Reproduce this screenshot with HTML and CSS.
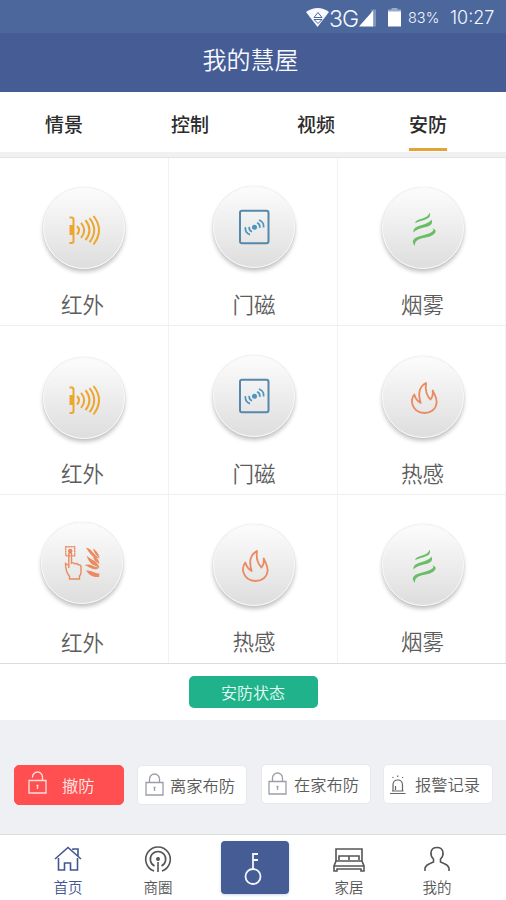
FILE: index.html
```html
<!DOCTYPE html>
<html lang="zh-CN">
<head>
<meta charset="utf-8">
<title>我的慧屋</title>
<link rel="stylesheet" href="styles.css">
</head>
<body>
<svg class="defs" aria-hidden="true">
  <symbol id="infrared" viewBox="0 0 83 83">
    <g fill="none" stroke="#eda62f" stroke-width="2">
      <path d="M26.500 30.500h2q2 0 2 2v21.500q0 2-2 2h-2"/>
      <path d="M26.500 38v10h3.500V38z" fill="#eda62f" stroke="none"/>
      <path d="M34 39q4 4 0 8.500M38 35.800q6.500 7.300 0 15M42.500 33.200q8 10 0 20M46.500 31.200q9.500 12 0 24M50.500 29q11 14 0 28.500"/>
    </g>
  </symbol>
  <symbol id="door" viewBox="0 0 83 83">
    <g fill="none" stroke="#5588aa" stroke-width="2">
      <rect x="27" y="24.800" width="28.500" height="32.500" rx="2"/>
      <g stroke="#4c94bd" stroke-width="1.700">
        <circle cx="41.500" cy="41.300" r="2.500" fill="#4c94bd" stroke="none"/>
        <path d="M44 36.800q3.300 1.300 2.700 5M46 34q5.300 2 4.500 7.500M39 45.800q-3.300-1.300-2.700-5M37 48.600q-5.300-2-4.500-7.500"/>
      </g>
    </g>
  </symbol>
  <symbol id="smoke" viewBox="0 0 83 83">
    <g fill="#69bd65">
      <path d="M33.300 36.300C34 30.500 44 33.500 47.800 25.700C50 33.500 38.500 32.500 33.300 36.300Z"/>
      <path d="M31.500 45.500C30.500 37 45 39.500 49.500 32.500C53 42 38 38.500 31.500 45.500Z"/>
      <path d="M33 59C25 49.500 42 49 48 46C53 43.500 51.500 41.800 49.500 41.300C57.500 42.500 53 49 44 50.500C35.500 52 32.500 54 33 59Z"/>
    </g>
  </symbol>
  <symbol id="flame" viewBox="0 0 83 83">
    <path fill="none" stroke="#e98a61" stroke-width="1.800" stroke-linejoin="round" d="M44 27C37.500 30.500 35.500 37 38.700 47Q34 44.500 32.300 38.500C29.500 42 29.700 45.500 30.300 48C32 54 37 57 42.700 57C49 57 54 53 54.600 47C55 42 52.500 38.500 50.700 34.500Q51.500 40 48.500 43.500C44.500 39.500 43 34 44 27Z"/>
  </symbol>
  <symbol id="touch" viewBox="0 0 83 83">
    <g fill="none" stroke="#e98a61" stroke-width="1.400">
      <rect x="24.700" y="24.700" width="9" height="9" stroke-dasharray="2 .5"/>
      <circle cx="29.200" cy="29" r="2.300" fill="#e98a61" stroke="none"/>
      <path d="M27.800 46V31.500q1.300-1.500 2.700 0v9.500q2-1 3 .8h1q2-1 2.500 1 3-.500 3 2v6q0 2-1.500 3v3.200H28.500v-2.500q-4-5-4-13l3.300 2"/>
    </g>
    <g fill="#e98a61">
      <path d="M45 25.700C51 26.500 51 31 58.500 36.500C51 36 48.500 31 45 25.700Z"/>
      <path d="M52 26.500C55 28.500 58 32 58.500 36Q53 32 52 26.500Z"/>
      <path d="M45.500 33.500C50 38.500 55 37 58.500 45.500C52 43 48.500 42.500 45.500 33.500Z"/>
      <path d="M52 34.500Q58 36 58.500 42Q53 39.500 52 34.500Z"/>
      <path d="M43.500 43C50 41 52 45 58.500 45.500C53 50 49 45 43.500 43Z"/>
      <path d="M45 48.500C51 48 53 51.500 58.500 51.500L58 55C51 55.500 48.500 53 45 48.500Z"/>
    </g>
  </symbol>
</svg>
<main class="app">
  <div class="status">
    <svg class="wifi" viewBox="0 0 24 20"><path d="M0 4Q12-4 23 4L11.500 19z" fill="#f8faff"/><path d="M8 9.500 12 4.500 16 9.500zM8 11.500h8l-4 4z" fill="none" stroke="#4c679c" stroke-width="1"/></svg>
    <span class="net">3G</span>
    <svg class="signal" viewBox="0 0 18 18"><path d="M13 0h5v18h-5z" fill="#7f95bb"/><path d="M0 18 15 1v17z" fill="#fff"/></svg>
    <svg class="battery" viewBox="0 0 13 19"><path d="M3.500 0h6v1.500H13V4H0V1.500h3.500z" fill="#9baac7"/><path d="M0 3.500h13V18.500H0z" fill="#fff"/></svg>
    <span class="percent">83%</span>
    <span class="clock">10:27</span>
  </div>
  <header class="title">我的慧屋</header>
  <nav class="tabs">
    <span class="tab">情景</span><span class="tab">控制</span><span class="tab">视频</span><span class="tab active">安防</span>
  </nav>
  <section class="grid">
    <div class="cell left"><div class="disc"><svg><use href="#infrared"/></svg></div><span>红外</span></div>
    <div class="cell high"><div class="disc"><svg><use href="#door"/></svg></div><span>门磁</span></div>
    <div class="cell"><div class="disc"><svg><use href="#smoke"/></svg></div><span>烟雾</span></div>
    <div class="cell middle left low"><div class="disc"><svg><use href="#infrared"/></svg></div><span>红外</span></div>
    <div class="cell middle high"><div class="disc"><svg><use href="#door"/></svg></div><span>门磁</span></div>
    <div class="cell middle"><div class="disc"><svg><use href="#flame"/></svg></div><span>热感</span></div>
    <div class="cell touch"><div class="disc"><svg><use href="#touch"/></svg></div><span>红外</span></div>
    <div class="cell"><div class="disc"><svg><use href="#flame"/></svg></div><span>热感</span></div>
    <div class="cell"><div class="disc"><svg><use href="#smoke"/></svg></div><span>烟雾</span></div>
  </section>
  <section class="state"><button class="state-button">安防状态</button></section>
  <section class="actions">
    <button class="action disarm"><svg class="lock" viewBox="0 0 20 24"><path d="M1 9.500h17V22H1zM4.500 6.500V6a5 5 0 0 1 10 0v3.500"/><path d="M9.500 14v4M8.500 14.500h2"/></svg><span>撤防</span></button>
    <button class="action away"><svg class="lock" viewBox="0 0 20 24"><path d="M1 9.500h17V22H1zM4.500 9.500V6a5 5 0 0 1 10 0v3.500"/><path d="M9.500 14v4M8.500 14.500h2"/></svg><span>离家布防</span></button>
    <button class="action home"><svg class="lock" viewBox="0 0 20 24"><path d="M1 9.500h17V22H1zM4.500 9.500V6a5 5 0 0 1 10 0v3.500"/><path d="M9.500 14v4M8.500 14.500h2"/></svg><span>在家布防</span></button>
    <button class="action log"><svg class="alarm" viewBox="0 0 18 21"><path d="M1 19.500h15.500M3 17h11.500M4 17v-6q0-5 4.700-5t4.800 5v6M6.500 16v-4M8.700 1.500v1.500M3.500 3l.8 1M14 3l-.8 1"/></svg><span>报警记录</span></button>
  </section>
  <nav class="bottom">
    <div class="item first current"><svg viewBox="0 0 32 28"><path d="M3 14 16 2.500 29 14M6.500 13v12h6v-7h6v7h7V13M21 5V4h5v7"/></svg><span>首页</span></div>
    <div class="item second"><svg viewBox="0 0 32 28"><path d="M12 26a12.300 12.300 0 1 1 8 0M12.500 21a7.700 7.700 0 1 1 7 0M16 17v10"/><circle cx="16" cy="14" r="1.200" fill="currentColor"/></svg><span>商圈</span></div>
    <button class="key" aria-label="钥匙"><svg viewBox="0 0 24 36"><circle cx="12" cy="25.500" r="7.500"/><path d="M12 18V2M12 3h5M12 9h5"/></svg></button>
    <div class="item fourth"><svg viewBox="0 0 32 28"><path d="M3 16V4h26v12M3 16 1 21v5h3v-2h24v2h3v-5l-2-5zM1 21h30M6 15v-4h10v4M16 11h10v4"/></svg><span>家居</span></div>
    <div class="item fifth"><svg viewBox="0 0 32 28"><path d="M4 26v-3q1-3 5-4.500l3.500-1.500v-3q-3-3-2.500-6.500Q10.500 2.500 16 2.500T22 7.500q.500 3.500-2.500 6.500v3l3.500 1.500q4 1.500 5 4.500v3"/></svg><span>我的</span></div>
  </nav>
</main>
</body>
</html>
```
FILE: styles.css
```css
* { box-sizing: border-box; }
body {
  margin: 0;
  background: #fff;
  color: #5c5c5c;
  font-family: "Noto Sans CJK SC", sans-serif;
  font-weight: 350;
}
button { font: inherit; border: 0; padding: 0; }
svg { display: block; flex: none; }
.defs { display: none; }
.app { width: 506px; height: 900px; display: flex; flex-direction: column; overflow: hidden; }
.status {
  height: 33px;
  flex: none;
  display: flex;
  align-items: center;
  padding: 2px 0 0 306px;
  background: #4c679c;
  color: #f4f8ff;
  font-family: Inter, sans-serif;
  font-weight: 300;
  white-space: nowrap;
}
.wifi { width: 24px; height: 20px; }
.net { width: 30px; font-size: 23px; line-height: 28px; letter-spacing: -1px; padding-top: 3px; margin-left: -1px; margin-right: 1px; }
.signal { width: 17px; height: 18px; margin-left: -1px; }
.battery { width: 13px; height: 19px; margin-left: 12px; }
.percent { width: 42px; margin-left: 7px; font-size: 14.500px; }
.clock { font-size: 18px; }
.title {
  height: 59px;
  flex: none;
  background: #455c95;
  color: #f7f9ff;
  text-align: center;
  font-size: 24px;
  line-height: 51px;
  padding-right: 5px;
}
.tabs {
  height: 66px;
  flex: none;
  display: flex;
  padding-left: 45px;
  border-bottom: 6px solid #f1f1f1;
  color: #2c2c2c;
  font-size: 19px;
  font-weight: 500;
}
.tab { width: 38px; height: 59px; line-height: 64px; margin-right: 88px; white-space: nowrap; }
.tab:nth-child(3) { margin-right: 74px; }
.active { margin-right: 0; border-bottom: 3px solid #e2a535; }
.grid {
  height: 507px;
  flex: none;
  display: grid;
  grid-template-columns: 169px 169px 168px;
  grid-template-rows: 168px 169px 168px;
  border-top: 1px solid #e4e4e4;
  border-bottom: 1px solid #dcdcdc;
  margin-top: -1px;
}
.cell {
  display: flex;
  flex-direction: column;
  align-items: center;
  padding: 29px 0 0 2px;
  border-right: 1px solid #f2f2f2;
  border-bottom: 1px solid #eee;
}
.cell:nth-child(n+7) { border-bottom: 0; }
.middle { padding-top: 30px; }
.disc {
  width: 82px;
  height: 82px;
  flex: none;
  border: 1px solid #f7f7f7;
  border-radius: 50%;
  background: linear-gradient(#fbfbfb 5%, #dfdfdf 95%);
  box-shadow: 0 3px 4px rgb(0 0 0 / 24%), 0 0 1px #ccc;
}
.disc svg { width: 83px; height: 83px; margin: -1px; }
.cell span { font-size: 21.500px; line-height: 30px; margin-top: 20px; }
.left, .touch { padding-left: 0; padding-right: 3px; }
.left .disc, .touch .disc, .high .disc { position: relative; }
.left .disc { left: 1px; }
.high .disc { top: -1px; }
.low .disc { top: 1px; }
.touch .disc { left: -1px; top: -2px; }
.touch span { margin-top: 21px; }
.state { height: 56px; flex: none; display: flex; justify-content: center; padding-top: 12px; }
.state-button { width: 129px; height: 32px; border-radius: 5px; background: #20b38b; color: #e5fcf4; font-size: 16px; line-height: 33px; }
.actions { height: 114px; flex: none; display: flex; align-items: flex-start; background: #eff0f4; padding: 45px 14px 0; }
.action {
  width: 110px;
  height: 40px;
  flex: none;
  display: flex;
  align-items: center;
  border: 1px solid #e8e9ed;
  border-radius: 5px;
  background: #fff;
  color: #5c5c5c;
  font-size: 16.300px;
  white-space: nowrap;
}
.disarm { background: #ff4f50; border-color: #ff4f50; color: #ffe9e7; padding-left: 13px; gap: 14px; }
.away { padding-left: 7px; margin-left: 13px; gap: 5px; }
.home { margin: -1px 0 0 14px; padding-left: 6px; gap: 6px; }
.log { margin: -1px 0 0 12px; padding-left: 5px; gap: 8px; }
.lock { width: 20px; height: 24px; fill: none; stroke: #9c9da9; stroke-width: 1.300; }
.disarm .lock { stroke: #ffe1de; margin-top: -4px; }
.alarm { width: 18px; height: 21px; fill: none; stroke: #666; stroke-width: 1.200; }
.bottom { height: 66px; flex: none; display: flex; border-top: 1px solid #ddd; color: #555; }
.item { width: 60px; flex: none; display: flex; flex-direction: column; align-items: center; padding-top: 10px; font-size: 14.500px; line-height: 20px; }
.item svg { width: 32px; height: 28px; fill: none; stroke: currentColor; stroke-width: 1.600; }
.item span { margin-top: 4px; }
.current { color: #435891; }
.first { margin-left: 38px; }
.second { margin-left: 30px; }
.key { width: 68px; height: 53px; margin: 6px 0 0 33px; border-radius: 4px; background: #455c95; box-shadow: 0 1px 3px #cbd6ef; display: flex; align-items: center; justify-content: center; }
.key svg { width: 24px; height: 36px; fill: none; stroke: #f3f6ff; stroke-width: 1.800; margin: 2px 4px 0 0; }
.fourth { margin-left: 30px; }
.fifth { margin-left: 28px; }
```
